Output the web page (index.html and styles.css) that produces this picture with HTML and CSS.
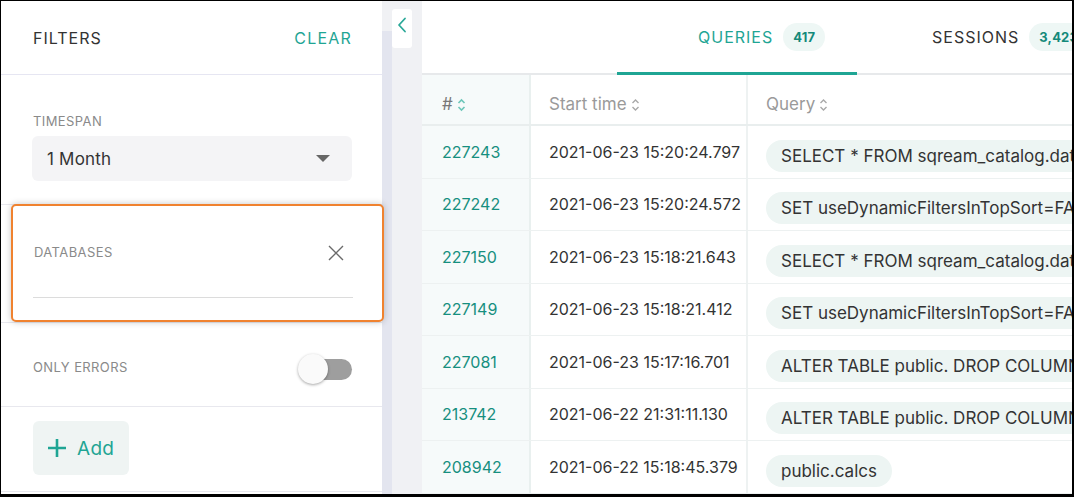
FILE: index.html
```html
<!DOCTYPE html>
<html>
<head>
<meta charset="utf-8">
<link rel="stylesheet" href="styles.css">
</head>
<body>
<div class="frame">
  <aside class="sidebar">
    <div class="side-head">
      <span class="title">FILTERS</span>
      <span class="clear">CLEAR</span>
    </div>
    <div class="section timespan">
      <div class="label">TIMESPAN</div>
      <div class="select">
        <span>1 Month</span>
        <svg class="caret" width="14" height="8" viewBox="0 0 14 8"><path d="M0 0 H14 L7 7 Z" fill="#666"/></svg>
      </div>
    </div>
    <div class="section databases">
      <div class="drag-card">
        <div class="db-row">
          <span class="label">DATABASES</span>
          <svg width="16" height="16" viewBox="0 0 16 16"><path d="M1 1 L15 15 M15 1 L1 15" stroke="#6a6a6a" stroke-width="1.4" fill="none"/></svg>
        </div>
        <div class="db-line"></div>
      </div>
    </div>
    <div class="section errors">
      <span class="label">ONLY ERRORS</span>
      <div class="toggle"><div class="track"></div><div class="knob"></div></div>
    </div>
    <div class="section add">
      <div class="add-btn">
        <svg width="20" height="20" viewBox="0 0 20 20"><path d="M10 1 V19 M1 10 H19" stroke="#1fa594" stroke-width="2.6" fill="none"/></svg>
        <span>Add</span>
      </div>
    </div>
  </aside>
  <div class="gutter">
    <div class="scroll"></div>
    <div class="collapse">
      <svg width="10" height="16" viewBox="0 0 10 16"><path d="M8 1.5 L2 8 L8 14.5" stroke="#2aa898" stroke-width="1.8" fill="none" stroke-linecap="round" stroke-linejoin="round"/></svg>
    </div>
  </div>
  <main class="main">
    <div class="tabs">
      <div class="tab active"><span>QUERIES</span><span class="badge">417</span></div>
      <div class="tab second"><span>SESSIONS</span><span class="badge">3,423</span></div>
    </div>
    <div class="table">
      <div class="row head">
        <div class="c id">#<svg class="sort teal" width="9" height="14" viewBox="0 0 9 14"><path d="M1.5 5 L4.5 2 L7.5 5 M1.5 9 L4.5 12 L7.5 9" stroke="#6cc6b9" stroke-width="1.6" fill="none"/></svg></div>
        <div class="c time">Start time<svg class="sort" width="9" height="14" viewBox="0 0 9 14"><path d="M1.5 5 L4.5 2 L7.5 5 M1.5 9 L4.5 12 L7.5 9" stroke="#a8a8a8" stroke-width="1.4" fill="none"/></svg></div>
        <div class="c query">Query<svg class="sort" width="9" height="14" viewBox="0 0 9 14"><path d="M1.5 5 L4.5 2 L7.5 5 M1.5 9 L4.5 12 L7.5 9" stroke="#a8a8a8" stroke-width="1.4" fill="none"/></svg></div>
      </div>
      <div class="row"><div class="c id">227243</div><div class="c time">2021-06-23 15:20:24.797</div><div class="c query"><span class="pill">SELECT * FROM sqream_catalog.databases</span></div></div>
      <div class="row"><div class="c id">227242</div><div class="c time">2021-06-23 15:20:24.572</div><div class="c query"><span class="pill">SET useDynamicFiltersInTopSort=FALSE</span></div></div>
      <div class="row"><div class="c id">227150</div><div class="c time">2021-06-23 15:18:21.643</div><div class="c query"><span class="pill">SELECT * FROM sqream_catalog.databases</span></div></div>
      <div class="row"><div class="c id">227149</div><div class="c time">2021-06-23 15:18:21.412</div><div class="c query"><span class="pill">SET useDynamicFiltersInTopSort=FALSE</span></div></div>
      <div class="row"><div class="c id">227081</div><div class="c time">2021-06-23 15:17:16.701</div><div class="c query"><span class="pill">ALTER TABLE public. DROP COLUMN</span></div></div>
      <div class="row"><div class="c id">213742</div><div class="c time">2021-06-22 21:31:11.130</div><div class="c query"><span class="pill">ALTER TABLE public. DROP COLUMN</span></div></div>
      <div class="row"><div class="c id">208942</div><div class="c time">2021-06-22 15:18:45.379</div><div class="c query"><span class="pill">public.calcs</span></div></div>
    </div>
  </main>
</div>
</body>
</html>
```

FILE: styles.css
```css
* { box-sizing: border-box; }
html, body { margin: 0; padding: 0; background: #fff; }
body { font-family: "Inter", "Liberation Sans", sans-serif; color: #333; }

.frame {
  width: 1074px;
  height: 497px;
  border-style: solid;
  border-color: #000;
  border-width: 1px 2px 3px 1px;
  display: flex;
  overflow: hidden;
  background: #fff;
}

/* Sidebar */
.sidebar {
  width: 381px;
  flex: none;
  display: flex;
  flex-direction: column;
  background: #fff;
}
.side-head {
  height: 74px;
  padding: 0 30px 0 32px;
  display: flex;
  align-items: center;
  justify-content: space-between;
  border-bottom: 1px solid #e6e6f2;
}
.title { font-size: 16px; letter-spacing: 1px; color: #333; }
.clear { font-size: 16px; letter-spacing: 1.2px; color: #1fa594; }

.section { padding: 0 30px 0 31px; border-bottom: 1px solid #e8e8ee; }
.label { font-size: 13px; letter-spacing: 0.4px; color: #8a8a8a; }

.timespan { height: 130px; padding-top: 38px; }
.timespan .label { padding-left: 1px; }
.select {
  margin-top: 7px;
  height: 45px;
  background: #f4f4f6;
  border-radius: 6px;
  display: flex;
  align-items: center;
  justify-content: space-between;
  padding: 0 22px 0 15px;
  font-size: 17px;
  letter-spacing: 0.2px;
  color: #333;
}

.databases { height: 118px; position: relative; }
.drag-card {
  position: absolute;
  top: -1px;
  left: 10px;
  right: -2px;
  bottom: 0;
  border: 2px solid #f0822f;
  border-radius: 5px;
  background: #fff;
  box-shadow: 0 0 7px rgba(0,0,0,0.22);
  padding: 38px 29px 0 20px;
  z-index: 2;
}
.db-row { display: flex; justify-content: space-between; align-items: center; padding-left: 1px; height: 16px; }
.db-row svg { margin-right: 9px; margin-top: 2px; }
.db-line { margin-top: 37px; height: 1px; background: #dcdcdc; }

.errors {
  height: 84px;
  display: flex;
  align-items: center;
  justify-content: space-between;
  padding-top: 8px;
}
.errors .label { padding-left: 1px; margin-top: -4px; }
.toggle { position: relative; width: 54px; height: 30px; }
.track { position: absolute; left: 10px; right: 0; top: 5px; height: 21px; border-radius: 11px; background: #9e9e9e; }
.knob {
  position: absolute; left: 0; top: 0; width: 30px; height: 30px; border-radius: 50%;
  background: #fafafa; box-shadow: 0 1px 3px rgba(0,0,0,0.35);
}

.add { height: 85px; padding-top: 14px; }
.add-btn {
  width: 96px; height: 54px; margin-left: 1px;
  background: #eff4f3; border-radius: 6px;
  display: flex; align-items: center; gap: 10px;
  padding-left: 14px;
  font-size: 19px; color: #1fa594; letter-spacing: 0.3px;
}

/* Gutter */
.gutter { width: 40px; flex: none; background: #f0f1f4; display: flex; }
.scroll { width: 10px; margin-top: 30px; background: #e3e5ef; }
.collapse {
  width: 20px; height: 39px; margin-top: 8px;
  background: #fff; border-radius: 3px;
  display: flex; align-items: center; justify-content: center;
  padding-bottom: 8px;
}

/* Main */
.main { flex: 1; min-width: 0; overflow: hidden; display: flex; flex-direction: column; }
.tabs {
  height: 74px; flex: none;
  display: flex;
  padding-left: 195px;
  border-bottom: 2px solid #e7e9eb;
}
.tab {
  flex: none;
  display: flex; align-items: center; gap: 10px;
  font-size: 16px; letter-spacing: 1px; color: #333;
  white-space: nowrap; padding-bottom: 1px;
}
.tab.active {
  width: 240px; padding-left: 81px; color: #1fa594;
  border-bottom: 3px solid #1fa594; margin-bottom: -2px; padding-bottom: 0;
}
.tab.second { padding-left: 75px; }
.badge {
  height: 28px; line-height: 28px; padding: 0 10px; border-radius: 14px;
  background: #eef7f5; color: #14897a; font-size: 13px; font-weight: 700; letter-spacing: 0.2px;
}

.table { display: flex; flex-direction: column; width: 900px; flex: none; }
.row {
  display: grid;
  grid-template-columns: 109px 217px 1fr;
  height: 52.5px;
  border-bottom: 1px solid #edf1f1;
}
.row.head { height: 51px; border-bottom: 2px solid #e9eeee; }
.c { display: flex; align-items: center; white-space: nowrap; font-size: 16px; }
.c.id { background: #f6fafa; border-right: 2px solid #e9f0ef; padding-left: 20px; color: #168f7f; }
.c.time { border-right: 2px solid #eef2f2; padding-left: 18px; color: #333; }
.c.query { padding-left: 18px; }
.head .c { color: #9a9a9a; font-size: 17px; padding-top: 9px; }
.head .c.id { color: #777; }
.sort { margin-left: 4px; margin-top: 1px; }
.pill {
  height: 32px; line-height: 32px; padding: 0 15px; margin-top: 8px;
  background: #edf5f3; border-radius: 16px; color: #333; font-size: 17px;
}
```
